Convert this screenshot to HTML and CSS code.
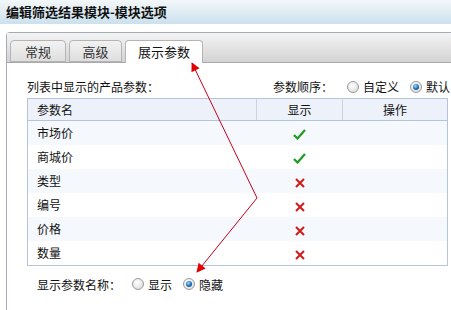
FILE: index.html
```html
<!DOCTYPE html>
<html lang="zh-CN">
<head>
<meta charset="UTF-8">
<title>编辑筛选结果模块-模块选项</title>
<link rel="stylesheet" href="styles.css">
</head>
<body>
<div class="titlebar">编辑筛选结果模块-模块选项</div>

<div class="panel">
  <div class="tabbar">
    <div class="tab tab-1">常规</div>
    <div class="tab tab-2">高级</div>
    <div class="tab tab-3 active">展示参数</div>
  </div>

  <div class="content">
    <div class="options-row">
      <span>列表中显示的产品参数：</span>
      <span class="radio-group">
        <span class="group-label">参数顺序：</span>
        <span class="radio"></span><span class="radio-text">自定义</span>
        <span class="radio checked"></span><span class="radio-text">默认</span>
      </span>
    </div>

    <table class="params">
      <thead>
        <tr>
          <th class="col-name">参数名</th>
          <th class="col-show">显示</th>
          <th class="col-op">操作</th>
        </tr>
      </thead>
      <tbody>
        <tr><td>市场价</td><td class="center"><svg class="ok" width="13" height="11" viewBox="0 0 13 11"><path d="M1 6 L4.5 9.5 L12 1" /></svg></td><td></td></tr>
        <tr><td>商城价</td><td class="center"><svg class="ok" width="13" height="11" viewBox="0 0 13 11"><path d="M1 6 L4.5 9.5 L12 1" /></svg></td><td></td></tr>
        <tr><td>类型</td><td class="center"><svg class="no" width="10" height="10" viewBox="0 0 10 10"><path d="M1 1 L9 9 M9 1 L1 9" /></svg></td><td></td></tr>
        <tr><td>编号</td><td class="center"><svg class="no" width="10" height="10" viewBox="0 0 10 10"><path d="M1 1 L9 9 M9 1 L1 9" /></svg></td><td></td></tr>
        <tr><td>价格</td><td class="center"><svg class="no" width="10" height="10" viewBox="0 0 10 10"><path d="M1 1 L9 9 M9 1 L1 9" /></svg></td><td></td></tr>
        <tr><td>数量</td><td class="center"><svg class="no" width="10" height="10" viewBox="0 0 10 10"><path d="M1 1 L9 9 M9 1 L1 9" /></svg></td><td></td></tr>
      </tbody>
    </table>

    <div class="bottom-row">
      <span class="group-label">显示参数名称：</span>
      <span class="radio"></span><span class="radio-text">显示</span>
      <span class="radio checked"></span><span class="radio-text">隐藏</span>
    </div>
  </div>
</div>

<!-- annotation arrows drawn over the screenshot -->
<svg class="arrows" width="451" height="310" viewBox="0 0 451 310">
  <defs>
    <marker id="head" viewBox="0 0 10 10" refX="9" refY="5" markerWidth="12" markerHeight="9" markerUnits="userSpaceOnUse" orient="auto-start-reverse">
      <path d="M0 0 L10 5 L0 10 z" fill="#e00000" />
    </marker>
  </defs>
  <polyline points="192,63 257,198 197,272" fill="none" stroke="#c8001a" stroke-width="1" marker-start="url(#head)" marker-end="url(#head)" />
</svg>
</body>
</html>
```

FILE: styles.css
```css
body {
  margin: 0;
  padding: 0;
  font-family: "Noto Sans CJK SC", "Noto Sans", sans-serif;
  font-size: 12px;
  color: #111;
  background-color: #fff;
  overflow: hidden;
}
.titlebar {
  height: 24px;
  line-height: 24px;
  padding-left: 6px;
  font-size: 13px;
  font-weight: bold;
  color: #111;
  background: linear-gradient(#f3f7f9, #cbe1ed);
}
.panel {
  margin: 8px 0 0 6px;
  width: 460px;
  height: 290px;
  border: 1px solid #a3abb3;
  border-right: none;
  border-top-left-radius: 4px;
}
.tabbar {
  height: 22px;
  padding: 7px 0 0 3px;
  display: flex;
  gap: 3px;
  background: linear-gradient(#f4f4f4, #d3d3d3);
  border-bottom: 1px solid #a8a8a8;
}
.tab {
  height: 22px;
  line-height: 21px;
  box-sizing: border-box;
  text-align: center;
  font-size: 13px;
  color: #333;
  border: 1px solid #b4b4b4;
  border-radius: 4px 4px 0 0;
  background: linear-gradient(#f2f2f2, #dedede);
}
.tab-1 { width: 56px; }
.tab-2 { width: 53px; }
.tab-3 { width: 78px; }
.tab.active {
  height: 23px;
  background: #fff;
  border-bottom: none;
  color: #111;
}
.content {
  padding: 14px 0 0 20px;
}
.options-row {
  width: 423px;
  height: 20px;
  line-height: 20px;
  display: flex;
  justify-content: space-between;
  margin-bottom: 1px;
}
.radio-group,
.bottom-row {
  display: flex;
  align-items: center;
}
.group-label {
  margin-right: 14px;
}
.radio {
  width: 10px;
  height: 10px;
  border: 1px solid #9a9a9a;
  border-radius: 50%;
  background: radial-gradient(circle at 40% 35%, #ffffff, #d6d6d6);
  margin-right: 4px;
  position: relative;
}
.radio.checked::after {
  content: "";
  position: absolute;
  left: 2px;
  top: 2px;
  width: 6px;
  height: 6px;
  border-radius: 50%;
  background: radial-gradient(circle at 40% 35%, #9fdcff, #1a6ab0 55%, #0c3f70);
}
.radio-text {
  margin-right: 11px;
}
.radio-text:last-child {
  margin-right: 0;
}
.params {
  width: 421px;
  border-collapse: collapse;
  border: 1px solid #b6c3da;
}
.params th {
  height: 21px;
  font-weight: normal;
  background-color: #edf1fa;
  border-bottom: 1px solid #b6c3da;
  border-right: 1px solid #c8d2e4;
  padding: 0;
}
.params th:last-child {
  border-right: none;
}
.col-name {
  text-align: left;
  padding-left: 9px !important;
}
.col-show {
  width: 85px;
}
.col-op {
  width: 104px;
}
.params td {
  height: 24px;
  padding: 0 0 0 9px;
  line-height: 24px;
}
.params td.center {
  text-align: center;
  padding: 0;
}
.params tbody tr:nth-child(odd) {
  background-color: #f5f8fc;
}
.params svg {
  vertical-align: middle;
}
.ok path {
  fill: none;
  stroke: #1f9a23;
  stroke-width: 2.2;
}
.no path {
  fill: none;
  stroke: #d11a1a;
  stroke-width: 2;
}
.bottom-row {
  height: 20px;
  margin-top: 8px;
  padding-left: 10px;
}
.bottom-row .group-label {
  margin-right: 11px;
}
.arrows {
  position: absolute;
  top: 0;
  left: 0;
  pointer-events: none;
}
```
